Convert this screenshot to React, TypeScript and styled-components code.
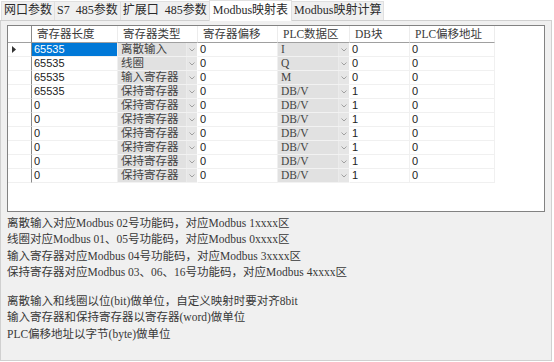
import styled, { createGlobalStyle } from 'styled-components';

const GlobalStyle = createGlobalStyle`
  html,
  body {
    margin: 0;
    background: #ffffff;
  }

  body {
    font-family: 'Liberation Serif', 'Noto Sans CJK SC', serif;
    color: #222222;
  }
`;

const TABS = ['网口参数', 'S7 485参数', '扩展口 485参数', 'Modbus映射表', 'Modbus映射计算'];
const ACTIVE_TAB = 3;

type CellKind = 'num' | 'combo';

const COLUMNS: { title: string; width: number; kind: CellKind }[] = [
  { title: '寄存器长度', width: 86, kind: 'num' },
  { title: '寄存器类型', width: 80, kind: 'combo' },
  { title: '寄存器偏移', width: 80, kind: 'num' },
  { title: 'PLC数据区', width: 72, kind: 'combo' },
  { title: 'DB块', width: 60, kind: 'num' },
  { title: 'PLC偏移地址', width: 85, kind: 'num' },
];

const ROWS = [
  ['65535', '离散输入', '0', 'I', '0', '0'],
  ['65535', '线圈', '0', 'Q', '0', '0'],
  ['65535', '输入寄存器', '0', 'M', '0', '0'],
  ['65535', '保持寄存器', '0', 'DB/V', '1', '0'],
  ['0', '保持寄存器', '0', 'DB/V', '1', '0'],
  ['0', '保持寄存器', '0', 'DB/V', '1', '0'],
  ['0', '保持寄存器', '0', 'DB/V', '1', '0'],
  ['0', '保持寄存器', '0', 'DB/V', '1', '0'],
  ['0', '保持寄存器', '0', 'DB/V', '1', '0'],
  ['0', '保持寄存器', '0', 'DB/V', '1', '0'],
];

const NOTES = [
  '离散输入对应Modbus 02号功能码，对应Modbus 1xxxx区',
  '线圈对应Modbus 01、05号功能码，对应Modbus 0xxxx区',
  '输入寄存器对应Modbus 04号功能码，对应Modbus 3xxxx区',
  '保持寄存器对应Modbus 03、06、16号功能码，对应Modbus 4xxxx区',
];

const UNIT_NOTES = [
  '离散输入和线圈以位(bit)做单位，自定义映射时要对齐8bit',
  '输入寄存器和保持寄存器以寄存器(word)做单位',
  'PLC偏移地址以字节(byte)做单位',
];

const GRID_TEMPLATE = `24px ${COLUMNS.map((c) => `${c.width}px`).join(' ')}`;

const ArrowIcon = () => (
  <svg width="6" height="4" viewBox="0 0 6 4">
    <path d="M0.5 0.5 L3 3 L5.5 0.5" fill="none" stroke="#a0a0a0" strokeWidth="1" />
  </svg>
);

const RowMarker = () => (
  <svg width="4" height="7" viewBox="0 0 4 7">
    <path d="M0 0 L4 3.5 L0 7 Z" fill="#333333" />
  </svg>
);

const App = () => {
  return (
    <StWindow>
      <GlobalStyle />
      <StTabStrip>
        {TABS.map((tab, i) => (
          <StTab key={tab} $active={i === ACTIVE_TAB}>
            {tab}
          </StTab>
        ))}
      </StTabStrip>

      <StPanel>
        <StGrid>
          <StHeaderRow>
            <StCorner />
            {COLUMNS.map((col) => (
              <StHeaderCell key={col.title}>{col.title}</StHeaderCell>
            ))}
          </StHeaderRow>

          {ROWS.map((row, r) => (
            <StRow key={r}>
              <StRowHeader>{r === 0 && <RowMarker />}</StRowHeader>
              {row.map((value, c) =>
                COLUMNS[c].kind === 'combo' ? (
                  <StCombo key={c}>
                    <span>{value}</span>
                    <StComboArrow>
                      <ArrowIcon />
                    </StComboArrow>
                  </StCombo>
                ) : (
                  <StCell key={c} $selected={r === 0 && c === 0}>
                    {value}
                  </StCell>
                ),
              )}
            </StRow>
          ))}
        </StGrid>

        <StNotes $gap={3}>
          {NOTES.map((line) => (
            <p key={line}>{line}</p>
          ))}
        </StNotes>

        <StNotes $gap={13}>
          {UNIT_NOTES.map((line) => (
            <p key={line}>{line}</p>
          ))}
        </StNotes>
      </StPanel>
    </StWindow>
  );
};

export default App;

const StWindow = styled.div`
  width: 554px;
  height: 362px;
  overflow: hidden;
`;

const StTabStrip = styled.div`
  display: flex;
  align-items: flex-end;

  height: 20px;
  padding-left: 1px;
`;

const StTab = styled.div<{ $active: boolean }>`
  position: relative;
  z-index: ${({ $active }) => ($active ? 2 : 1)};

  height: ${({ $active }) => ($active ? 21 : 19)}px;
  margin-bottom: ${({ $active }) => ($active ? -1 : 0)}px;
  margin-right: -1px;
  padding: 0 ${({ $active }) => ($active ? 3 : 2)}px;
  box-sizing: border-box;
  border: 1px solid #e0e0e0;
  border-bottom: none;

  background: ${({ $active }) => ($active ? '#ffffff' : '#f0f0f0')};
  font-size: 12px;
  line-height: ${({ $active }) => ($active ? 18 : 17)}px;
  word-spacing: 3px;
  color: #2a2a2a;
  white-space: nowrap;
`;

const StPanel = styled.div`
  width: 552px;
  height: 341px;
  box-sizing: border-box;
  padding: 4px 6px 0;
  border: 1px solid #d0d0d0;

  background: #f0f0f0;
`;

const StGrid = styled.div`
  width: 538px;
  height: 187px;
  box-sizing: border-box;
  border: 1px solid #828282;

  background: #ffffff;
`;

const StHeaderRow = styled.div`
  display: grid;
  grid-template-columns: ${GRID_TEMPLATE};

  height: 17px;
`;

const StCorner = styled.div`
  border-right: 1px solid #8a8a8a;
  border-bottom: 1px solid #a0a0a0;
`;

const StHeaderCell = styled.div`
  padding-left: 5px;
  border-right: 1px solid #ececec;
  border-bottom: 1px solid #a0a0a0;

  font-size: 11.5px;
  line-height: 16px;
  color: #3a3a3a;
  white-space: nowrap;
`;

const StRow = styled.div`
  display: grid;
  grid-template-columns: ${GRID_TEMPLATE};

  height: 14px;
`;

const StRowHeader = styled.div`
  display: flex;
  align-items: center;

  padding-left: 4px;
  border-right: 1px solid #8a8a8a;
  border-bottom: 1px solid #f0f0f0;
`;

const StCell = styled.div<{ $selected: boolean }>`
  padding-left: 2px;
  border-right: 1px solid #f0f0f0;
  border-bottom: 1px solid #f0f0f0;

  background: ${({ $selected }) => ($selected ? '#0078d7' : '#ffffff')};
  font-family: 'Liberation Sans', 'Noto Sans CJK SC', sans-serif;
  font-size: 11px;
  line-height: 13px;
  color: ${({ $selected }) => ($selected ? '#ffffff' : '#222222')};
`;

const StCombo = styled.div`
  display: flex;

  border-right: 1px solid #ffffff;
  border-bottom: 1px solid #f2f2f2;
  background: #e1e1e1;
  overflow: hidden;

  > span {
    flex: 1;
    padding-left: 3px;

    font-size: 11.5px;
    line-height: 13px;
    color: #444444;
    white-space: nowrap;
  }
`;

const StComboArrow = styled.div`
  display: flex;
  align-items: center;
  justify-content: center;

  width: 10px;
  border-left: 1px solid #ebebeb;
  background: #e6e6e6;
`;

const StNotes = styled.div<{ $gap: number }>`
  margin-top: ${({ $gap }) => $gap}px;

  p {
    margin: 0;
    font-size: 11.5px;
    line-height: 16.3px;
    color: #383838;
    white-space: nowrap;
  }
`;
